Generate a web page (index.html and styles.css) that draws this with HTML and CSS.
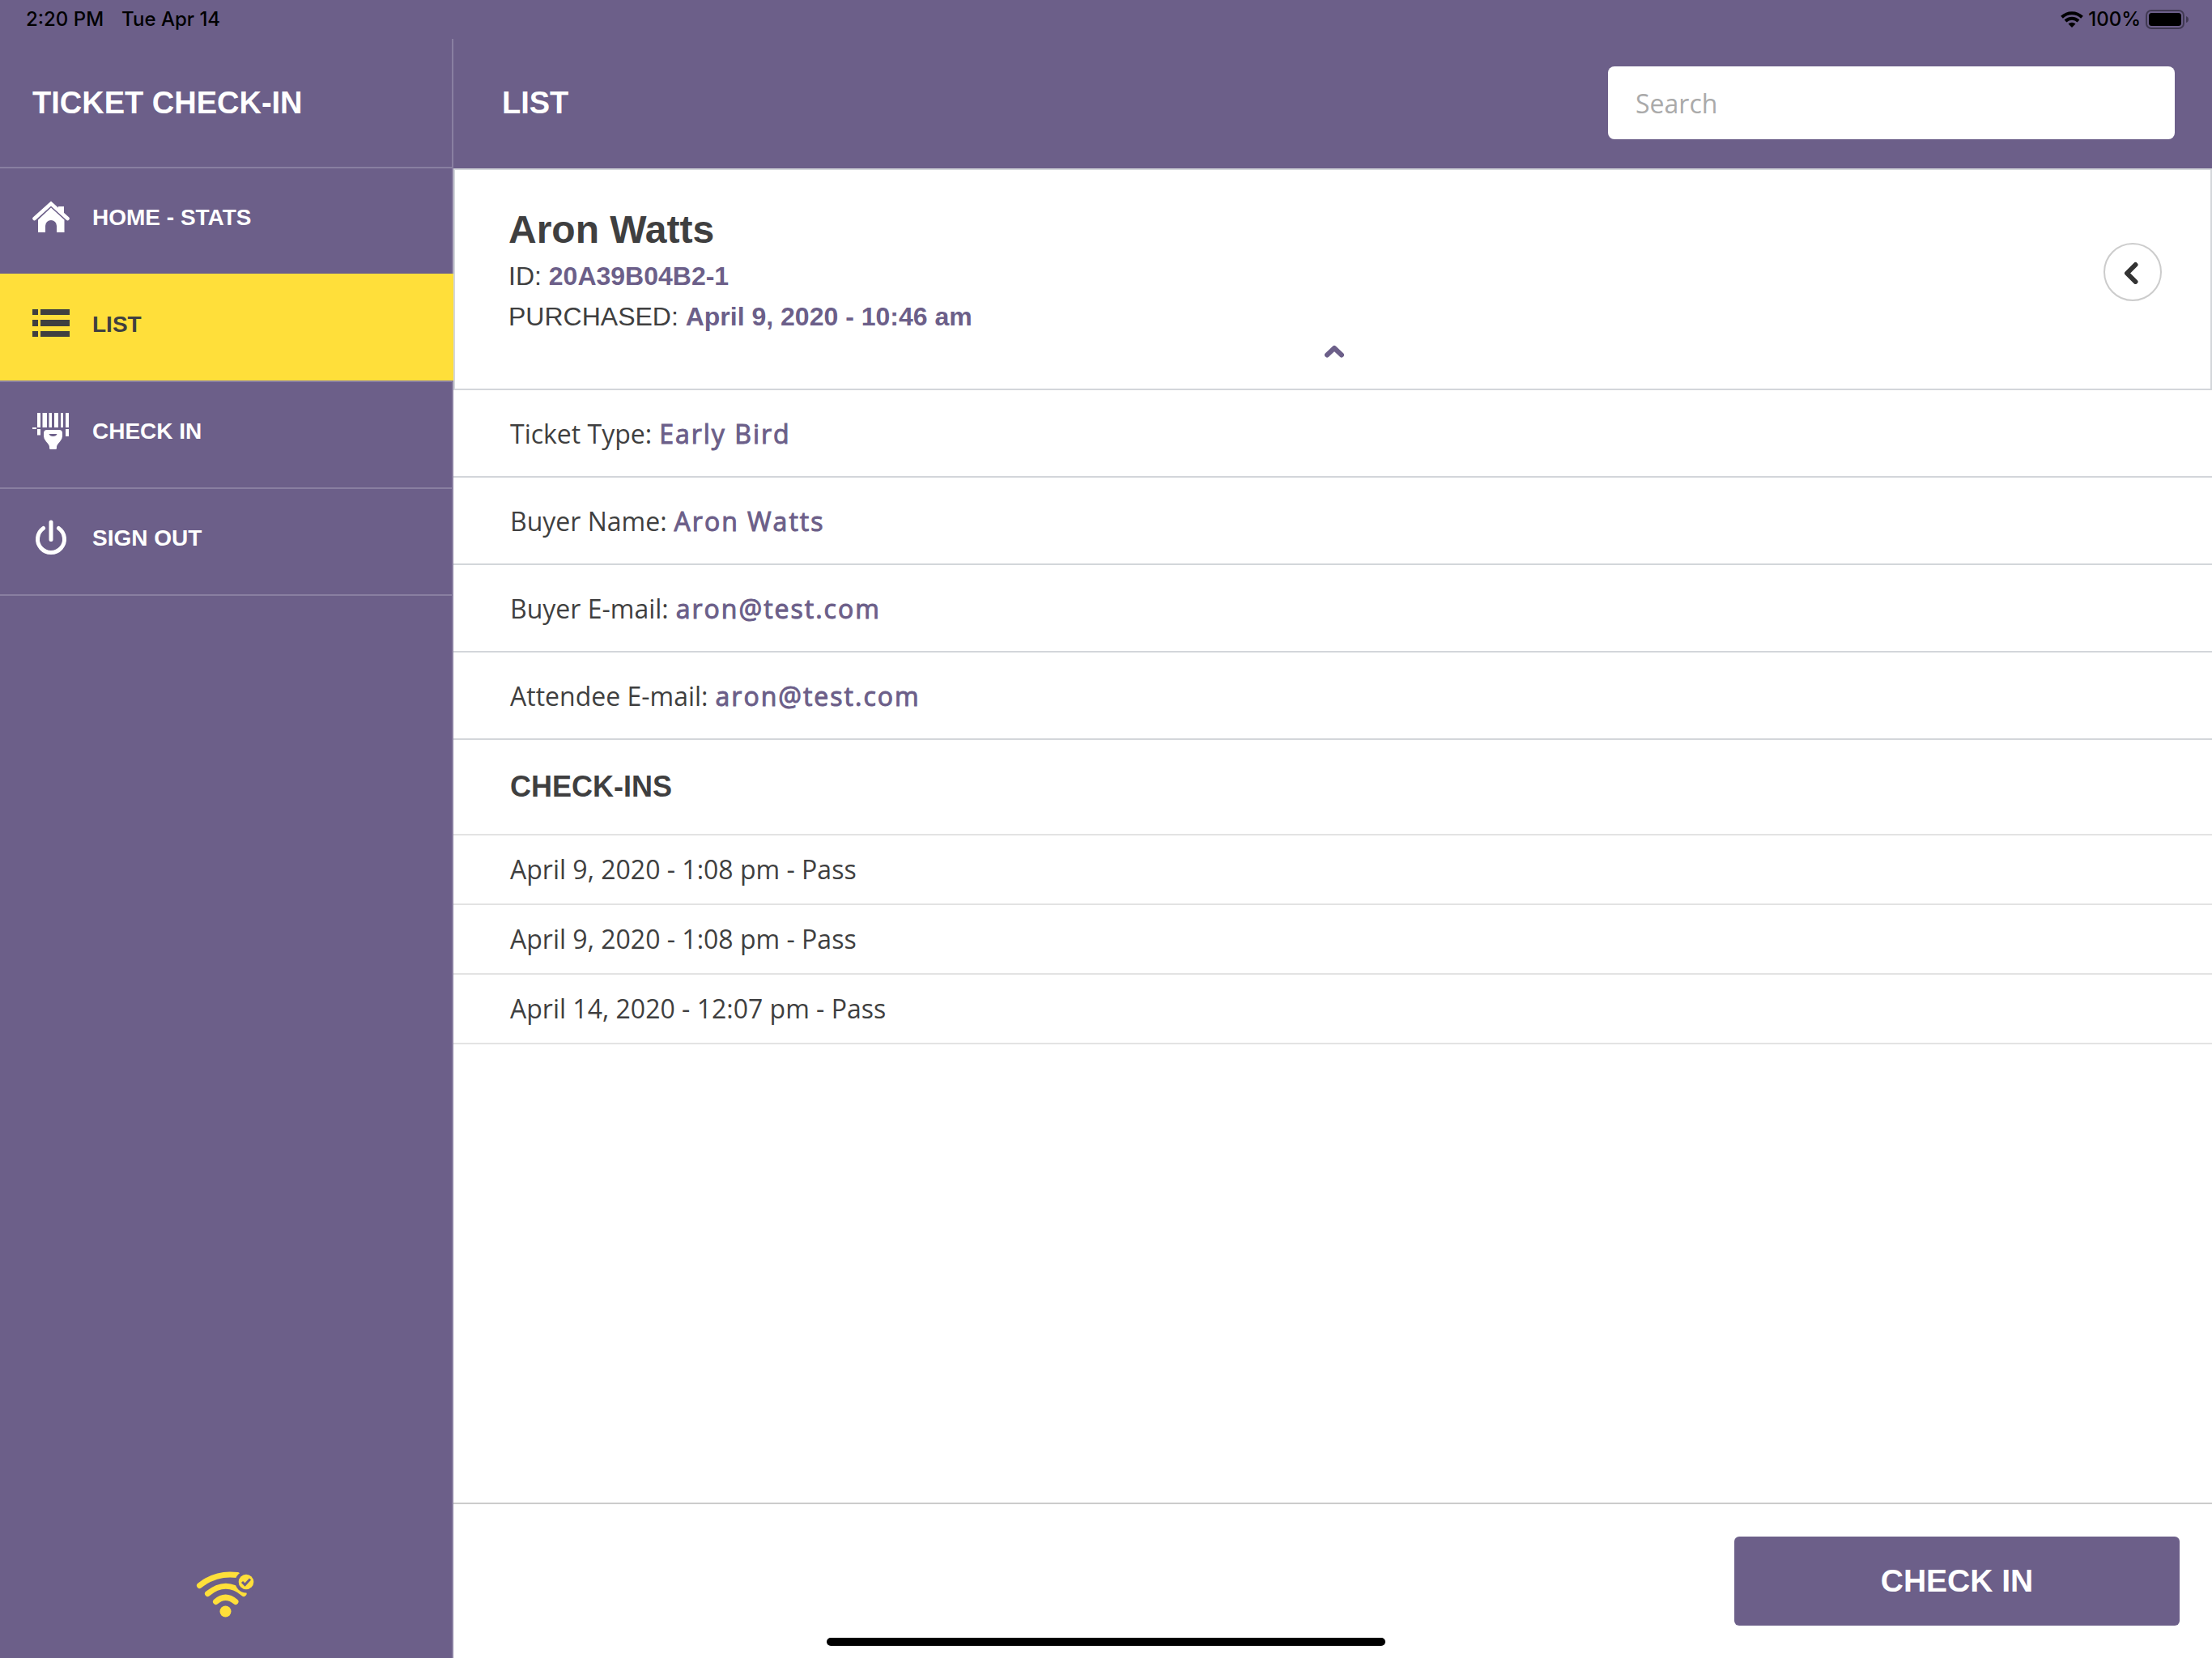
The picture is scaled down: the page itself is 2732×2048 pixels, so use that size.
FILE: index.html
```html
<!DOCTYPE html>
<html lang="en">
<head>
<meta charset="utf-8">
<meta name="viewport" content="width=device-width, initial-scale=1">
<title>Ticket Check-In</title>
<link rel="stylesheet" href="styles.css">
</head>
<body>
<div class="app">
  <div class="status">
    <div class="status-group">
      <span>2:20 PM</span>
      <span>Tue Apr 14</span>
    </div>
    <div class="status-right">
      <svg class="status-wifi" viewBox="0 0 28 20" aria-hidden="true"><g fill="none" stroke="#000" stroke-width="4"><path d="M1.500 7.200A18 18 0 0 1 26.500 7.200"/><path d="M6 12A11.500 11.500 0 0 1 22 12"/></g><path d="M9.500 15.500a6.500 6.500 0 0 1 9 0L14 20z"/></svg>
      <span>100%</span>
      <svg class="battery" viewBox="0 0 54 24" aria-hidden="true"><rect x="1" y="1" width="46" height="22" rx="6" fill="none" stroke="#000" stroke-opacity=".4" stroke-width="2"/><rect x="4" y="4" width="40" height="16" rx="3.500"/><path d="M50 8q3 1 3 4t-3 4z" fill-opacity=".4"/></svg>
    </div>
  </div>
  <div class="layout">
    <aside class="sidebar">
      <h1 class="brand">TICKET CHECK-IN</h1>
      <nav class="nav">
        <a class="nav-item" href="#home">
          <svg class="nav-icon" viewBox="0 0 46 54" aria-hidden="true"><path d="M2.500 28 23 9.500 43.500 28" fill="none" stroke="currentColor" stroke-width="4.500" stroke-linecap="round"/><path fill="currentColor" d="M32 13h7v13l-7-6zM23 14.500 39.500 29.500V45H30v-8a7 7 0 0 0-14 0v8H7V29.500z"/></svg>
          <span>HOME - STATS</span>
        </a>
        <a class="nav-item nav-item-active" href="#list" aria-current="page">
          <svg class="nav-icon" viewBox="0 0 46 54" aria-hidden="true"><path fill="currentColor" d="M0 8h7v7H0zM10 8h36v7H10zM0 21h7v8H0zM10 21h36v8H10zM0 35h7v7H0zM10 35h36v7H10z"/></svg>
          <span>LIST</span>
        </a>
        <a class="nav-item" href="#check-in">
          <svg class="nav-icon" viewBox="0 0 46 54" aria-hidden="true"><g fill="currentColor"><path d="M6 4h4v18H6zM12.500 4h5.500v18h-5.500zM20.500 4h3.500v18h-3.500zM27 4h5v18h-5zM35 4h3v18h-3zM41 4h4v18h-4zM0 22h5v2H0zM6 24h4v7.500H6zM41 24h4v9h-4z"/><path fill-rule="evenodd" d="M18 25h15q4 0 4 4v4q0 3-3 6.500-4 4-4 6.500v1.500q0 1.500-1.500 1.500h-6q-1.500 0-1.500-1.500V46q0-2.500-4-6.500-3-3.500-3-6.500v-4q0-4 4-4zm2.500 5q1 3 5 3t5-3z"/></g></svg>
          <span>CHECK IN</span>
        </a>
        <a class="nav-item" href="#sign-out">
          <svg class="nav-icon" viewBox="0 0 46 54" aria-hidden="true"><g fill="none" stroke="currentColor" stroke-width="5" stroke-linecap="round"><path d="M23 7v21.500M13.500 14.500A16.500 16.500 0 1 0 32.500 14.500"/></g></svg>
          <span>SIGN OUT</span>
        </a>
      </nav>
      <div class="connection">
        <svg class="connection-icon" viewBox="0 0 72 60" role="img" aria-label="Online"><g fill="none" stroke="#ffdf3a" stroke-width="7" stroke-linecap="round"><path d="M4.500 18.500Q25 2 51 5.500"/><path d="M14.500 28.500Q37 10 59 28.500" /><path d="M24.500 38.500q12-10.500 24.500 0"/></g><circle cx="36.500" cy="50.500" r="7" fill="#ffdf3a"/><circle cx="62" cy="14" r="13.500" fill="#6c5f89"/><circle cx="62" cy="14" r="9.300" fill="#ffdf3a"/><path d="m57 14 3.500 3.500 6.500-7" fill="none" stroke="#6c5f89" stroke-width="3"/></svg>
      </div>
    </aside>
    <main class="main">
      <header class="topbar">
        <h2 class="topbar-title">LIST</h2>
        <input class="search" type="search" placeholder="Search" aria-label="Search">
      </header>
      <section class="ticket">
        <div class="ticket-text">
          <h3 class="ticket-name">Aron Watts</h3>
          <p class="ticket-line">ID: <strong>20A39B04B2-1</strong></p>
          <p class="ticket-line">PURCHASED: <strong>April 9, 2020 - 10:46 am</strong></p>
        </div>
        <button class="back" type="button" aria-label="Back"><svg class="back-icon" viewBox="0 0 18 28" aria-hidden="true"><path d="M14.500 4 4 14.500 14.500 25" fill="none" stroke="#333" stroke-width="6" stroke-linecap="round" stroke-linejoin="round"/></svg></button>
        <button class="collapse" type="button" aria-label="Collapse"><svg class="collapse-icon" viewBox="0 0 26 16" aria-hidden="true"><path d="m4 12.500 9-8.500 9 8.500" fill="none" stroke="#6c5f89" stroke-width="6" stroke-linecap="round" stroke-linejoin="round"/></svg></button>
      </section>
      <dl class="details">
        <div class="detail"><dt>Ticket Type:</dt><dd>Early Bird</dd></div>
        <div class="detail"><dt>Buyer Name:</dt><dd>Aron Watts</dd></div>
        <div class="detail"><dt>Buyer E-mail:</dt><dd>aron@test.com</dd></div>
        <div class="detail"><dt>Attendee E-mail:</dt><dd>aron@test.com</dd></div>
      </dl>
      <h3 class="log-title">CHECK-INS</h3>
      <ul class="log">
        <li class="log-row">April 9, 2020 - 1:08 pm - Pass</li>
        <li class="log-row">April 9, 2020 - 1:08 pm - Pass</li>
        <li class="log-row">April 14, 2020 - 12:07 pm - Pass</li>
      </ul>
      <footer class="actions">
        <button class="check-in" type="button">CHECK IN</button>
      </footer>
    </main>
  </div>
  <div class="home-bar"></div>
</div>
</body>
</html>
```

FILE: styles.css
```css
* {
  box-sizing: border-box;
}

body,
h1,
h2,
h3,
p,
ul,
dl,
dd {
  margin: 0;
  padding: 0;
}

body {
  font-family: "Liberation Sans", Arial, sans-serif;
  color: #3f3f40;
  background: #fff;
}

button,
input {
  margin: 0;
  border: 0;
  font: inherit;
}

.app {
  position: relative;
  display: flex;
  flex-direction: column;
  min-height: 100vh;
}

.status {
  display: flex;
  justify-content: space-between;
  align-items: center;
  height: 48px;
  padding: 0 28px 0 32px;
  background: #6c5f89;
  color: #000;
  font: 500 24px/48px Inter, sans-serif;
}

.status-group {
  display: flex;
  gap: 22px;
}

.status-right {
  display: flex;
  align-items: center;
  gap: 6px;
}

.status-wifi {
  width: 28px;
  height: 20px;
}

.battery {
  width: 54px;
  height: 24px;
}

.layout {
  display: flex;
  flex: 1;
}

.sidebar {
  display: flex;
  flex-direction: column;
  flex: none;
  width: 560px;
  background: linear-gradient(#897fa1, #897fa1) right / 2px 100% no-repeat #6c5f89;
  color: #fff;
}

.brand {
  height: 160px;
  padding-left: 40px;
  border-bottom: 2px solid #897fa1;
  font-size: 38px;
  line-height: 158px;
}

.nav-item {
  display: flex;
  align-items: center;
  gap: 28px;
  height: 132px;
  padding: 0 40px 8px;
  border-bottom: 2px solid #897fa1;
  color: #fff;
  font-size: 28px;
  font-weight: 700;
  text-decoration: none;
}

.nav-item:has(+ .nav-item-active) {
  border-bottom-color: #ffdf3a;
}

.nav-item-active {
  background: #ffdf3a;
  background-clip: padding-box;
  color: #3f3f40;
}

.nav-icon {
  width: 46px;
  height: 54px;
}

.connection {
  display: flex;
  justify-content: center;
  margin-top: auto;
  padding: 0 4px 48px 0;
}

.connection-icon {
  width: 72px;
  height: 60px;
}

.main {
  display: flex;
  flex-direction: column;
  flex: 1;
  min-width: 0;
}

.topbar {
  display: flex;
  align-items: center;
  justify-content: space-between;
  height: 160px;
  padding: 0 46px 2px 60px;
  background: #6c5f89;
  color: #fff;
}

.topbar-title {
  font-size: 38px;
}

.search {
  width: 700px;
  height: 90px;
  padding: 0 34px;
  border-radius: 8px;
  background: #fff;
  color: #3f3f40;
  font: 32px "Open Sans", sans-serif;
}

.search::placeholder {
  color: #aaa;
}

.ticket {
  position: relative;
  display: flex;
  justify-content: space-between;
  height: 274px;
  padding: 46px 60px 0 66px;
  border: 2px solid #d3d6da;
}

.ticket-name {
  margin-bottom: 4px;
  font-size: 48px;
  line-height: 56px;
}

.ticket-line {
  font-size: 32px;
  line-height: 50px;
}

.ticket-line strong {
  color: #6c5f89;
}

.back {
  display: flex;
  align-items: center;
  justify-content: center;
  width: 72px;
  height: 72px;
  margin-top: 44px;
  padding: 2px 4px 0 0;
  border: 2px solid #ccc;
  border-radius: 50%;
  background: #fff;
}

.back-icon {
  width: 18px;
  height: 28px;
}

.collapse {
  position: absolute;
  bottom: 32px;
  left: 50%;
  width: 48px;
  height: 28px;
  margin-left: -22px;
  padding: 0;
  background: none;
}

.collapse-icon {
  display: block;
  width: 26px;
  height: 16px;
  margin: 0 auto;
}

.detail {
  display: flex;
  gap: 9px;
  height: 108px;
  padding-left: 70px;
  border-bottom: 2px solid #d3d6da;
  font: 32px/108px "Open Sans", sans-serif;
}

.detail dd {
  color: #6c5f89;
  letter-spacing: 2px;
  -webkit-text-stroke: 1px #6c5f89;
}

.log-title {
  height: 118px;
  padding-left: 70px;
  border-bottom: 2px solid #e3e3e3;
  font-size: 36px;
  line-height: 116px;
}

.log {
  list-style: none;
}

.log-row {
  height: 86px;
  padding-left: 70px;
  border-bottom: 2px solid #e3e3e3;
  font: 32px/84px "Open Sans", sans-serif;
}

.actions {
  display: flex;
  justify-content: flex-end;
  margin-top: auto;
  padding: 40px;
  border-top: 2px solid #ccc;
}

.check-in {
  width: 550px;
  height: 110px;
  border-radius: 6px;
  background: #6c5f89;
  color: #fff;
  font-size: 39px;
  font-weight: 700;
}

.home-bar {
  position: absolute;
  bottom: 15px;
  left: 50%;
  width: 690px;
  height: 10px;
  margin-left: -345px;
  border-radius: 5px;
  background: #000;
}
```
